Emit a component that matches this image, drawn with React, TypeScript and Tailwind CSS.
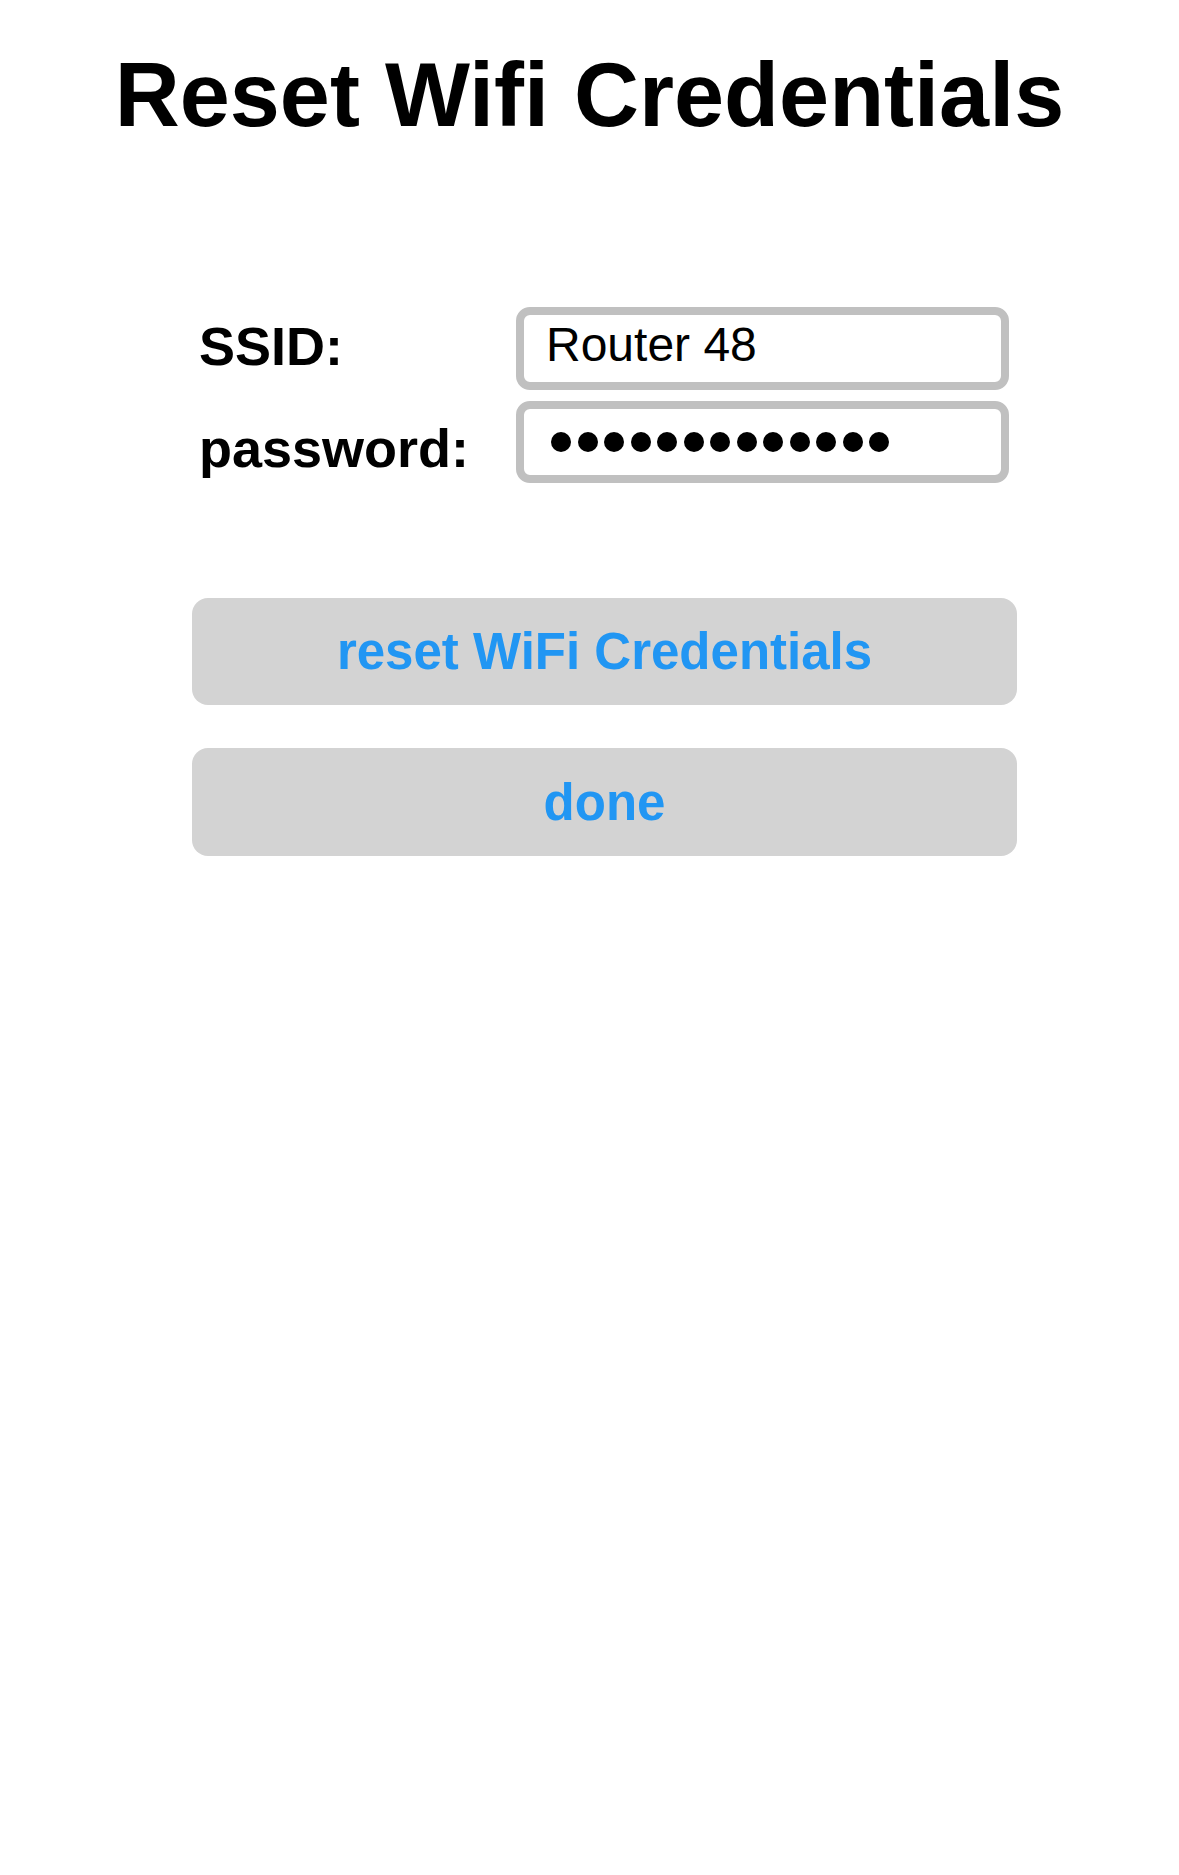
import React from "react";

export default function App() {
  const dots = Array.from({ length: 13 });
  return (
    <div className="min-h-[1875px] w-full bg-white font-['Liberation_Sans',Arial,sans-serif] text-black">
      <h1 className="pt-[45px] text-center text-[90px] font-bold leading-[100px]">
        Reset Wifi Credentials
      </h1>

      <div className="ml-[199px] mt-[162px] flex">
        <div className="flex w-[317px] flex-col pt-[9px] text-[54px] font-bold leading-[60px]">
          <div className="h-[60px]">SSID:</div>
          <div className="mt-[42px] h-[60px]">password:</div>
        </div>
        <div className="flex w-[493px] flex-col gap-[11px]">
          <div className="flex h-[83px] items-center rounded-[14px] border-[8px] border-[#c0c0c0] pb-[7px] pl-[22px] text-[48px] leading-none">
            Router 48
          </div>
          <div className="flex h-[82px] items-center rounded-[14px] border-[8px] border-[#c0c0c0] pl-[27px]">
            <div className="flex gap-[6.5px]">
              {dots.map((_, i) => (
                <div key={i} className="h-[20px] w-[20px] rounded-full bg-black" />
              ))}
            </div>
          </div>
        </div>
      </div>

      <div className="ml-[192px] mt-[115px] flex w-[825px] flex-col gap-[43px]">
        <button className="flex h-[107px] items-center justify-center rounded-[16px] bg-[#d3d3d3] text-[51px] font-bold leading-none text-[#2196f3]">
          reset WiFi Credentials
        </button>
        <button className="flex h-[108px] items-center justify-center rounded-[16px] bg-[#d3d3d3] text-[51px] font-bold leading-none text-[#2196f3]">
          done
        </button>
      </div>
    </div>
  );
}
